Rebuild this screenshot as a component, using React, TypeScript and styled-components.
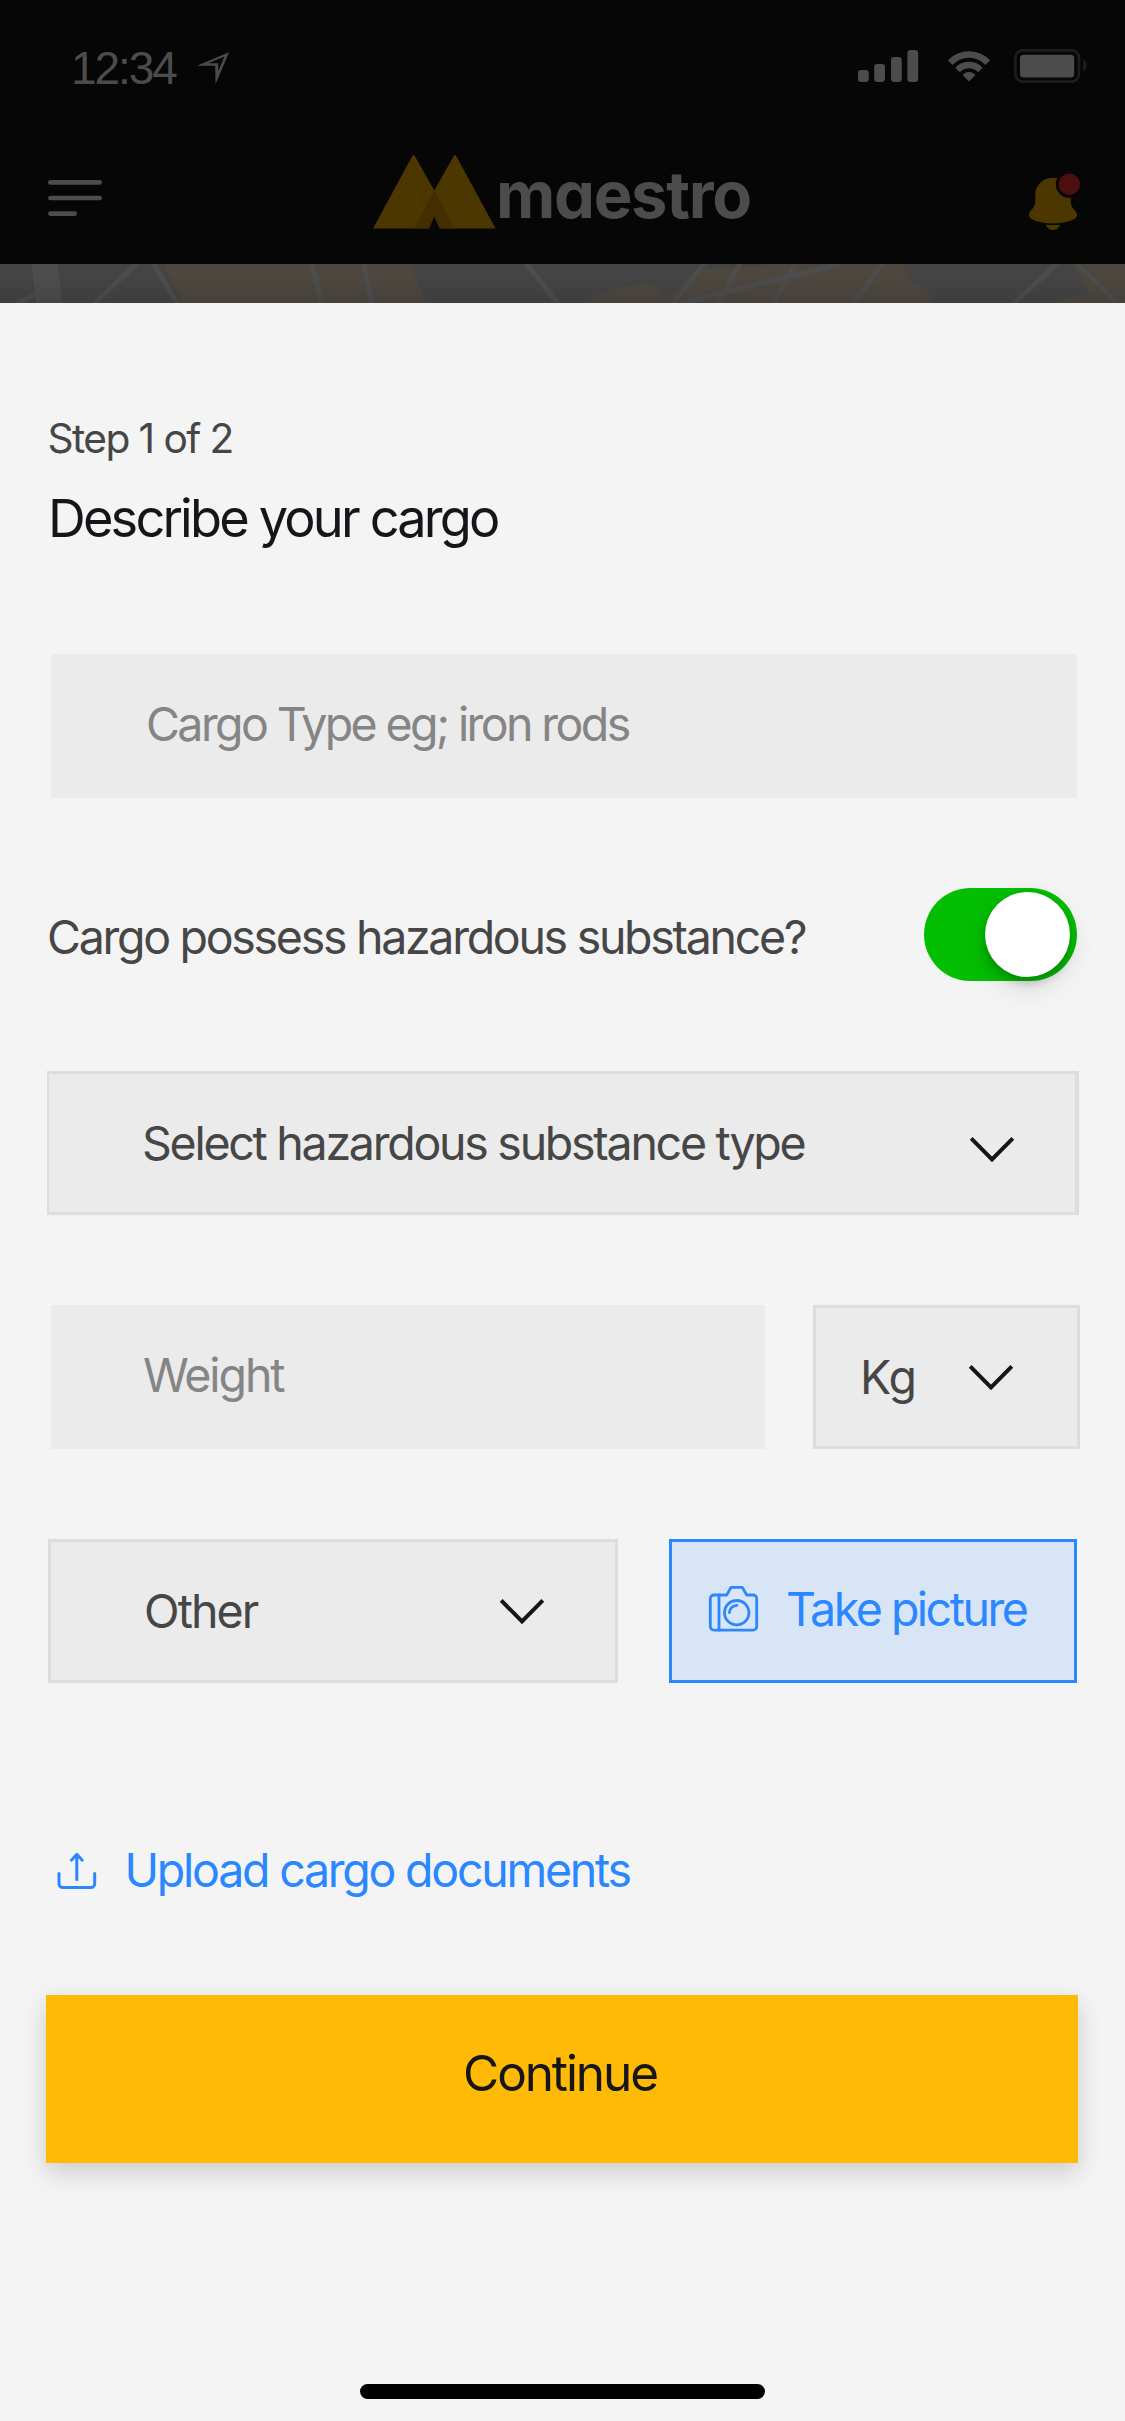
import React from 'react';
import styled, { createGlobalStyle } from 'styled-components';

const GlobalStyle = createGlobalStyle`
  *, *::before, *::after { box-sizing: border-box; }
  body { margin: 0; background: #f4f4f4; }
  svg { display: block; flex: none; }
`;

const color = {
  header: '#060606',
  dimWhite: '#4c4c4c',
  sheet: '#f4f4f4',
  field: '#ebebeb',
  border: '#dddddd',
  ink: '#151619',
  body: '#464646',
  muted: '#858585',
  blue: '#2b87ff',
  blueTint: '#d8e5f6',
  amber: '#ffba05',
};

const Screen = styled.div`
  width: 1125px;
  height: 2421px;
  display: flex;
  flex-direction: column;
  overflow: hidden;
  background: ${color.sheet};
  font-family: Inter, 'Liberation Sans', sans-serif;
`;

const Header = styled.header`
  height: 264px;
  flex: none;
  background: ${color.header};
  display: flex;
  flex-direction: column;
`;

const StatusBar = styled.div`
  height: 132px;
  padding: 0 37px 0 71px;
  display: flex;
  align-items: center;
  justify-content: space-between;
`;

const Clock = styled.div`
  display: flex;
  align-items: center;
  gap: 19px;
  padding-top: 4px;
  color: ${color.dimWhite};
  font: 400 46px/52px 'Liberation Sans', Arial, sans-serif;
`;

const Time = styled.span`
  width: 107px;
  letter-spacing: -2.1px;
`;

const Indicators = styled.div`
  display: flex;
  align-items: center;
`;

const WifiSlot = styled.div`
  margin: 0 23px 0 28px;
`;

const NavBar = styled.nav`
  height: 132px;
  padding: 0 39px 0 48px;
  display: grid;
  grid-template-columns: 325px 1fr auto;
  align-items: center;
`;

const Logo = styled.div`
  display: flex;
  align-items: center;
  height: 74px;
  margin-bottom: 12px;
`;

const Wordmark = styled.span`
  color: ${color.dimWhite};
  font-size: 65px;
  font-weight: 700;
  line-height: 74px;
  letter-spacing: -1.3px;
  font-feature-settings: 'cv11';
  padding-top: 6px;
`;

const BellSlot = styled.div`
  padding-top: 4px;
`;

const MapStrip = styled.div`
  height: 39px;
  flex: none;
  background: #444444;
`;

const Sheet = styled.main`
  flex: 1;
  display: flex;
  flex-direction: column;
  align-items: flex-start;
  padding-top: 111px;
`;

const StepLabel = styled.p`
  margin: 0 0 22px 47.5px;
  color: ${color.body};
  font-size: 40.7px;
  line-height: 50px;
  letter-spacing: -1.6px;
`;

const Title = styled.h1`
  margin: 0 0 104px 48px;
  color: ${color.ink};
  font-size: 52.3px;
  font-weight: 400;
  line-height: 64px;
  letter-spacing: -2.82px;
`;

const Row = styled.div<{ $left: number; $gap?: number }>`
  display: flex;
  gap: ${(p) => p.$gap ?? 0}px;
  margin: 0 0 90px ${(p) => p.$left}px;
`;

const Label = styled.span<{ $tone?: string; $track: number }>`
  color: ${(p) => p.$tone ?? color.body};
  font-size: 46.5px;
  line-height: 56px;
  letter-spacing: ${(p) => p.$track}px;
  white-space: nowrap;
`;

const TextField = styled.div<{ $width: number; $inset: number }>`
  width: ${(p) => p.$width}px;
  height: 144px;
  padding: 0 0 4px ${(p) => p.$inset}px;
  display: flex;
  align-items: center;
  background: ${color.field};
`;

const SelectField = styled.div<{ $width: number; $left: number; $right: number; $edges?: string }>`
  width: ${(p) => p.$width}px;
  height: 144px;
  padding: 0 ${(p) => p.$right}px 0 ${(p) => p.$left}px;
  display: flex;
  align-items: center;
  justify-content: space-between;
  background: ${color.field};
  border: 3px solid ${color.border};
  border-width: ${(p) => p.$edges ?? '3px'};
`;

const ChevronSlot = styled.span<{ $drop?: number }>`
  padding-top: ${(p) => p.$drop ?? 0}px;
`;

const ToggleRow = styled.div`
  width: 1030px;
  height: 93px;
  margin: 0 0 90px 47px;
  display: flex;
  align-items: center;
  justify-content: space-between;
`;

const ToggleLabel = styled(Label)`
  padding-top: 5px;
`;

const Toggle = styled.div`
  width: 153px;
  height: 93px;
  padding: 4px 7px;
  display: flex;
  justify-content: flex-end;
  border-radius: 47px;
  background: #04be04;
`;

const Knob = styled.div`
  width: 85px;
  height: 85px;
  border-radius: 50%;
  background: #ffffff;
  box-shadow: 0 9px 30px rgba(0, 0, 0, 0.12), 0 6px 10px rgba(0, 0, 0, 0.2);
`;

const PictureButton = styled.div`
  width: 408px;
  height: 144px;
  padding: 0 0 4px 36px;
  display: flex;
  align-items: center;
  gap: 27px;
  background: ${color.blueTint};
  border: 3px solid ${color.blue};
`;

const UploadLink = styled.div`
  margin: 69px 0 97px 56.5px;
  height: 56px;
  display: flex;
  align-items: center;
  gap: 28px;
`;

const ContinueButton = styled.div`
  width: 1032px;
  height: 168px;
  margin-left: 46px;
  padding: 0 4px 12px 0;
  display: flex;
  align-items: center;
  justify-content: center;
  background: ${color.amber};
  box-shadow: 0 9px 24px rgba(0, 0, 0, 0.17);
  color: ${color.ink};
  font-size: 49.5px;
  letter-spacing: -2.1px;
`;

const HomeIndicator = styled.div`
  width: 405px;
  height: 15px;
  margin: 221px 0 0 360px;
  border-radius: 8px;
  background: #000000;
`;

const LocationIcon = () => (
  <svg width="33" height="33" viewBox="0 0 33 33">
    <path fill={color.dimWhite} fillRule="evenodd" d="M32 .2 0 13.8h18.2L18.5 32.2ZM27.4 4.6 21.2 19.5v-8.3H11.2Z" />
  </svg>
);

const SignalIcon = () => (
  <svg width="61" height="32" viewBox="0 0 61 32" fill={color.dimWhite}>
    <rect x="0" y="20" width="10.8" height="12" rx="3.2" />
    <rect x="16.2" y="14" width="10.8" height="18" rx="3.2" />
    <rect x="33" y="7" width="10.8" height="25" rx="3.2" />
    <rect x="49.4" y="0" width="10.8" height="32" rx="3.2" />
  </svg>
);

const WifiIcon = () => (
  <svg width="44" height="31" viewBox="0 0 44 31">
    <clipPath id="wifiWedge">
      <path d="M22 30.5 -8.5 0 -8.5 -5H52.5V0Z" />
    </clipPath>
    <g clipPath="url(#wifiWedge)" fill="none" stroke={color.dimWhite}>
      <circle cx="22" cy="29.4" r="25.8" strokeWidth="6.5" />
      <circle cx="22" cy="29.4" r="15.4" strokeWidth="6.5" />
      <circle cx="22" cy="29.4" r="8.4" fill={color.dimWhite} stroke="none" />
    </g>
  </svg>
);

const BatteryIcon = () => (
  <svg width="74" height="34" viewBox="0 0 74 34">
    <rect x="1.4" y="1.4" width="63.6" height="31.2" rx="7.5" fill="none" stroke="#1c1c1c" strokeWidth="2.9" />
    <rect x="6" y="5.7" width="54.2" height="22.7" rx="3.5" fill={color.dimWhite} />
    <path d="M69 10.2c2.3 1 3.7 3.5 3.7 6.2s-1.4 5.2-3.7 6.2Z" fill="#1c1c1c" />
  </svg>
);

const MenuIcon = () => (
  <svg width="54" height="36" viewBox="0 0 54 36" stroke={color.dimWhite} strokeWidth="4.7" strokeLinecap="round">
    <path d="M2.4 2.4H51.6M2.4 18H51.6M2.4 33.6H26.7" />
  </svg>
);

const LogoMark = () => (
  <svg width="123" height="74" viewBox="0 0 123 74">
    <path fill="#4c3700" d="M0 73.5 39.7 .3H41.3L61.3 35.5 81.2 .3H82.8L122.6 73.5H66.7L61.3 61 56 73.5Z" />
    <path fill="#442d00" d="M61.3 35.5 41.3 73.5H56L61.3 61 66.7 73.5H81.7Z" />
  </svg>
);

const BellIcon = () => (
  <svg width="58" height="60" viewBox="0 0 58 60">
    <g fill="#4c3700">
      <path d="M24.8 7.7C14.6 7.7 7.3 15.5 7.3 25v6.500C7.3 38.5 .9 40.5 .9 45c0 5 11.2 8.4 24 8.4S49 50 49 45c0-4.5-6.3-6.5-6.3-13.5V25c0-9.5-7.7-17.3-17.900-17.3Z" />
      <path d="M17.700 54.700q7.200.800 14.600 0C31 58 28.200 60 25 60s-6-2-7.300-5.300Z" />
    </g>
    <circle cx="41.3" cy="14.3" r="13.3" fill={color.header} stroke="#120506" strokeWidth=".6" />
    <circle cx="41.3" cy="14.3" r="10.7" fill="#4c0f10" />
  </svg>
);

const MapArt = () => (
  <svg width="1125" height="39" viewBox="0 0 1125 39">
    <defs>
      <linearGradient id="mapShade" x1="0" y1="0" x2="0" y2="1">
        <stop offset=".3" stopColor="#000" stopOpacity="0" />
        <stop offset="1" stopColor="#000" stopOpacity=".1" />
      </linearGradient>
    </defs>
    <g fill="#4d4740">
      <path d="M163 0 182 39H427L410 0Z" />
      <path d="M583 39C605 26 630 20 645 20 660 21 661 31 668 31 679 29 686 8 700 6L765 1 775 0H905C904 12 909 17 917 20 928 24 932 30 932 39Z" />
      <path d="M1071 0C1078 8 1085 20 1089 30L1065 34Q1058 36 1055 39H1125V0Z" />
    </g>
    <path fill="#4d4d4d" d="M31.7 0H57.3L62 39H36Z" />
    <path
      stroke="#4d4d4d"
      strokeWidth="5"
      fill="none"
      d="M16 40 38 29M138 -2 94 40M152 -2 178 40M311 -2 322.5 40M363.5 -2 371.5 40M525 -2 559 41M705 -2 672 41M741 -2 717 41M680 40 755 21 840 0M796 -2 773 40M884 -2 852 41M1059 -2 1012 41M1075 -2 1119 41"
    />
    <rect width="1125" height="39" fill="url(#mapShade)" />
  </svg>
);

const Chevron = () => (
  <svg width="46" height="26" viewBox="0 0 46 26">
    <path d="M2.2 2.4 23 23.4 43.8 2.4" fill="none" stroke={color.ink} strokeWidth="4" />
  </svg>
);

const CameraIcon = () => (
  <svg width="51" height="48" viewBox="0 0 51 48" fill="none" stroke={color.blue} strokeWidth="2.8" strokeLinejoin="round" strokeLinecap="round">
    <path d="M18.7 10 23 2.4H34.3L38.7 10H45a3.7 3.7 0 0 1 3.7 3.7V41.5a3.7 3.7 0 0 1-3.7 3.7H6a3.7 3.7 0 0 1-3.7-3.7V13.7A3.7 3.7 0 0 1 6 10Z" />
    <path d="M11 10V45" />
    <circle cx="28.7" cy="27.7" r="12.2" />
    <path d="M21.4 27.7A7.5 7.5 0 0 1 28.9 20.3" />
  </svg>
);

const UploadIcon = () => (
  <svg width="40" height="37" viewBox="0 0 40 37" fill="none" stroke={color.blue} strokeWidth="3" strokeLinejoin="round" strokeLinecap="round">
    <path d="M2 21.5V31.5a4 4 0 0 0 4 4H33.7a4 4 0 0 0 4-4V21.5" />
    <path d="M19.8 27.5V2.5M14.4 8.2 19.8 2.3 25.2 8.2" />
  </svg>
);

export default function App() {
  return (
    <>
      <GlobalStyle />
      <Screen>
        <Header>
          <StatusBar>
            <Clock>
              <Time>12:34</Time>
              <LocationIcon />
            </Clock>
            <Indicators>
              <SignalIcon />
              <WifiSlot>
                <WifiIcon />
              </WifiSlot>
              <BatteryIcon />
            </Indicators>
          </StatusBar>
          <NavBar>
            <MenuIcon />
            <Logo>
              <LogoMark />
              <Wordmark>maestro</Wordmark>
            </Logo>
            <BellSlot>
              <BellIcon />
            </BellSlot>
          </NavBar>
        </Header>
        <MapStrip>
          <MapArt />
        </MapStrip>
        <Sheet>
          <StepLabel>Step 1 of 2</StepLabel>
          <Title>Describe your cargo</Title>
          <Row $left={51}>
            <TextField $width={1026} $inset={95}>
              <Label $tone={color.muted} $track={-2.6}>Cargo Type eg; iron rods</Label>
            </TextField>
          </Row>
          <ToggleRow>
            <ToggleLabel $track={-2.29}>Cargo possess hazardous substance?</ToggleLabel>
            <Toggle>
              <Knob />
            </Toggle>
          </ToggleRow>
          <Row $left={47}>
            <SelectField $width={1032} $left={93} $right={60.5} $edges="3px 4px 3px 2px">
              <Label $track={-2.26}>Select hazardous substance type</Label>
              <ChevronSlot $drop={11}>
                <Chevron />
              </ChevronSlot>
            </SelectField>
          </Row>
          <Row $left={51} $gap={48}>
            <TextField $width={714} $inset={92}>
              <Label $tone={color.muted} $track={-2.1}>Weight</Label>
            </TextField>
            <SelectField $width={267} $left={44} $right={63}>
              <Label $track={-0.8}>Kg</Label>
              <ChevronSlot>
                <Chevron />
              </ChevronSlot>
            </SelectField>
          </Row>
          <Row $left={48} $gap={51}>
            <SelectField $width={570} $left={93} $right={70}>
              <Label $track={-1.9}>Other</Label>
              <ChevronSlot>
                <Chevron />
              </ChevronSlot>
            </SelectField>
            <PictureButton>
              <CameraIcon />
              <Label $tone={color.blue} $track={-2.5}>Take picture</Label>
            </PictureButton>
          </Row>
          <UploadLink>
            <UploadIcon />
            <Label $tone={color.blue} $track={-2.24}>Upload cargo documents</Label>
          </UploadLink>
          <ContinueButton>Continue</ContinueButton>
          <HomeIndicator />
        </Sheet>
      </Screen>
    </>
  );
}
